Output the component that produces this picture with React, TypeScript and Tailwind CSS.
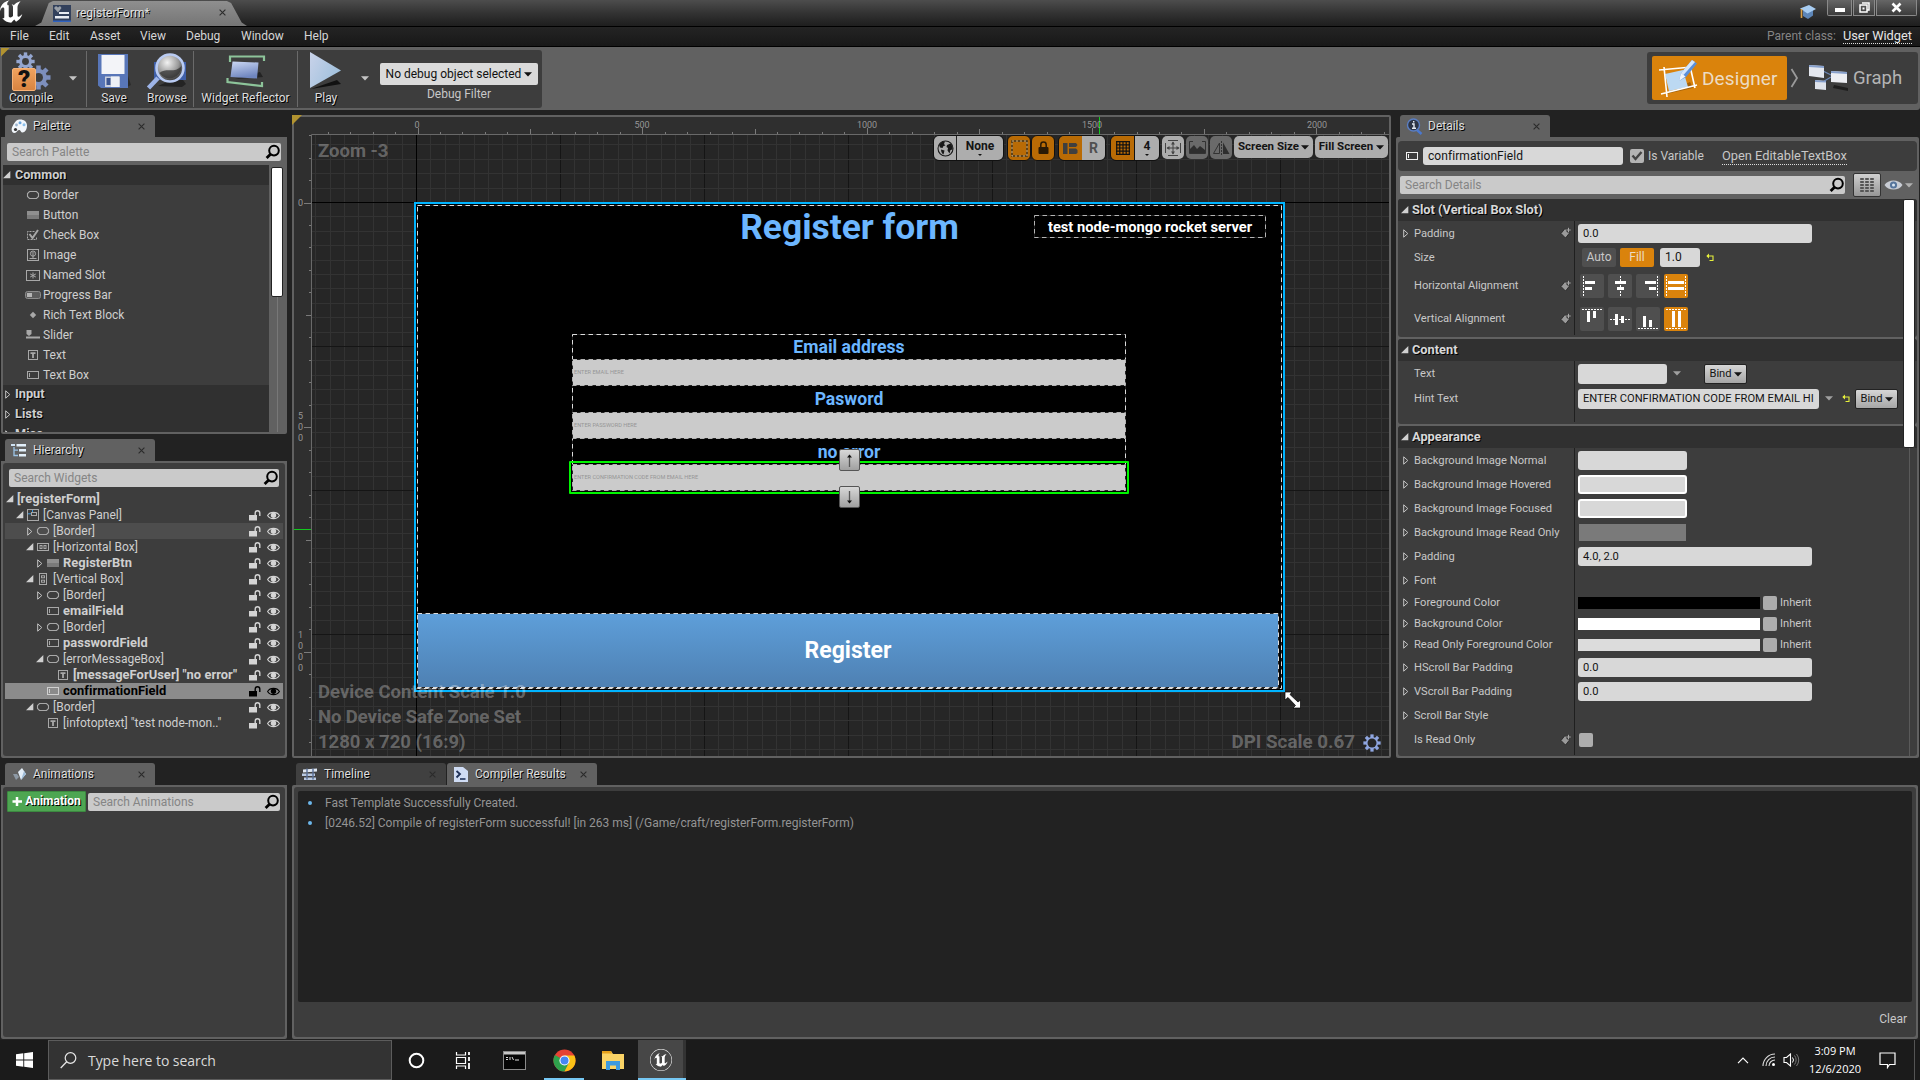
import React from "react";
import { SiUnrealengine } from "react-icons/si";

const SHADOW = "[text-shadow:1px_1px_0_#000]";

/* ---------- small glyphs ---------- */

function Down({ className = "" }: { className?: string }) {
  return (
    <svg width="8" height="5" viewBox="0 0 8 5" className={`shrink-0 ${className}`}>
      <path d="M0 0.3h8L4 4.6z" fill="currentColor" />
    </svg>
  );
}

function Open() {
  return (
    <svg width="8" height="8" viewBox="0 0 8 8" className="shrink-0">
      <path d="M7.3 0v7.3H0z" fill="#d0d0d0" />
    </svg>
  );
}

function Closed() {
  return (
    <svg width="6" height="9" viewBox="0 0 6 9" className="shrink-0">
      <path d="M0.7 0.8v7.4L4.8 4.5z" fill="none" stroke="#c4c4c4" strokeWidth="1" />
    </svg>
  );
}

function Magnifier() {
  return (
    <svg width="16" height="16" viewBox="0 0 16 16" className="shrink-0">
      <circle cx="9" cy="6.6" r="4.8" fill="none" stroke="#000" strokeWidth="2" />
      <path d="M5.5 10.3L1.6 14" stroke="#000" strokeWidth="2.8" />
    </svg>
  );
}

function Close() {
  return (
    <svg width="7" height="7" viewBox="0 0 7 7" className="shrink-0">
      <path d="M0.6 0.6l5.8 5.8M6.4 0.6L0.6 6.4" stroke="#2b2b2b" strokeWidth="1.1" />
    </svg>
  );
}

type IconName =
  | "border" | "button" | "check" | "image" | "slot" | "progress" | "rich"
  | "slider" | "text" | "textbox" | "canvas" | "hbox" | "vbox";

function WIcon({ name, color = "#a8a8a8" }: { name: IconName; color?: string }) {
  const s = { fill: "none", stroke: color, strokeWidth: 1 };
  return (
    <svg width="16" height="14" viewBox="0 0 16 14" className="shrink-0">
      {name === "border" && <path d="M4.5 3.5h7l2 2v3l-2 2h-7l-2-2v-3z" {...s} strokeWidth="1.1" />}
      {name === "button" && <><rect x="2" y="3" width="12" height="8" fill="#8f8f8f" /><path d="M2 7h12v4H2z" fill="#7a7a7a" /></>}
      {name === "check" && <><path d="M9.5 3.5h-7v8h9V9" {...s} strokeDasharray="2 1" /><path d="M4.5 6l3 4L13 2" fill="none" stroke={color} strokeWidth="2" /></>}
      {name === "image" && <><rect x="2.5" y="1.5" width="11" height="11" {...s} /><circle cx="8" cy="5.6" r="2.6" {...s} /><path d="M8 6v5M4.5 10.5h7M6.5 5h3" {...s} /></>}
      {name === "slot" && <><rect x="1.5" y="2.5" width="13" height="10" {...s} /><path d="M8 4.5v6M5.2 6l5.6 3M10.8 6L5.2 9" {...s} /></>}
      {name === "progress" && <><rect x="0.5" y="3.5" width="15" height="7" rx="2" fill="#5c5c5c" stroke="#8c8c8c" /><rect x="2" y="5" width="5" height="4" fill="#b5b5b5" /></>}
      {name === "rich" && <path d="M8 3.8l3.2 3.2L8 10.2 4.8 7z" fill={color} />}
      {name === "slider" && <><path d="M1 8.5h14v2H1z" fill={color} /><path d="M1.5 2h5v4L4 8 1.5 6z" fill={color} /></>}
      {name === "text" && <><rect x="3.5" y="2.5" width="9" height="9" {...s} /><path d="M5.5 5.2h5M8 5v5" fill="none" stroke={color} strokeWidth="1.8" /></>}
      {name === "textbox" && <><rect x="2.5" y="3.5" width="11" height="7" {...s} /><path d="M4.5 5v4" {...s} /></>}
      {name === "canvas" && <><rect x="2.5" y="1.5" width="11" height="11" {...s} /><rect x="6.5" y="4.5" width="5" height="3" {...s} /><path d="M3 5.8h3M7.5 2v2" stroke="#3f9be0" /></>}
      {name === "hbox" && <><rect x="2.5" y="3.5" width="11" height="7" {...s} /><rect x="5" y="5.5" width="2" height="3" {...s} /><rect x="9" y="5.5" width="2" height="3" {...s} /></>}
      {name === "vbox" && <><rect x="4.5" y="1.5" width="7" height="11" {...s} /><rect x="6.5" y="3.8" width="3" height="2" {...s} /><rect x="6.5" y="8.2" width="3" height="2" {...s} /></>}
    </svg>
  );
}

function Lock({ color }: { color: string }) {
  return (
    <svg width="12" height="11" viewBox="0 0 12 11" className="shrink-0">
      <rect x="0" y="5" width="8" height="5.5" fill={color} />
      <path d="M6.2 5V3a2.3 2.3 0 0 1 4.6 0v3" fill="none" stroke={color} strokeWidth="1.4" />
    </svg>
  );
}

function Eye({ color }: { color: string }) {
  return (
    <svg width="13" height="9" viewBox="0 0 13 9" className="shrink-0">
      <path d="M0.6 4.5C3 0.3 10 0.3 12.4 4.5 10 8.7 3 8.7 0.6 4.5z" fill="none" stroke={color} strokeWidth="1.1" />
      <circle cx="6.5" cy="4.3" r="2.7" fill={color} />
    </svg>
  );
}

function Keyframe() {
  return (
    <svg width="12" height="12" viewBox="0 0 12 12" className="shrink-0">
      <path d="M5 1.5L9.5 6 5.5 11 1 6.5z" fill="#9a9a9a" stroke="#222" strokeWidth="0.8" />
      <path d="M8.5 0.5v5M6 3h5" stroke="#3d3d3d" strokeWidth="3" />
      <path d="M8.5 0.8v4.4M6.3 3h4.4" stroke="#a8a8a8" strokeWidth="1" />
    </svg>
  );
}

function Reset() {
  return (
    <svg width="9" height="9" viewBox="0 0 9 9" className="shrink-0">
      <path d="M1 3h6v4.5H3.5" fill="none" stroke="#e6f03c" strokeWidth="1.1" />
      <path d="M0.3 3L3 0.6v4.8z" fill="#e6f03c" />
    </svg>
  );
}

function Gear({ size, color, hole, inner = 3.6 }: { size: number; color: string; hole: string; inner?: number }) {
  const teeth = [0, 45, 90, 135, 180, 225, 270, 315];
  return (
    <svg width={size} height={size} viewBox="-10 -10 20 20" className="shrink-0">
      {teeth.map((a) => (
        <rect key={a} x="-1.8" y="-9.6" width="3.6" height="5" fill={color} transform={`rotate(${a})`} />
      ))}
      <circle r="6.8" fill={color} />
      <circle r={inner} fill={hole} />
    </svg>
  );
}

const U_PATH =
  "M19.13 13.729c-.206.997-1.126 3.557-4.06 4.942l-1.179-1.325-1.988 2a7.338 7.338 0 01-5.804-2.978 2.859 2.859 0 00.65.123c.326.006.678-.114.678-.66v-5.394a.89.89 0 00-1.116-.89c-.92.212-1.656 2.509-1.656 2.509a7.304 7.304 0 012.528-5.597 7.408 7.408 0 013.73-1.721c-1.006.573-1.57 1.507-1.57 2.29 0 1.262.76 1.109.984.923v7.28a1.157 1.157 0 00.148.256 1.075 1.075 0 00.88.445c.76 0 1.747-.868 1.747-.868V9.172c0-.6-.452-1.324-.905-1.572 0 0 .838-.149 1.484.346a5.537 5.537 0 01.387-.425c1.508-1.48 2.929-1.902 4.112-2.112 0 0-2.151 1.69-2.151 3.96 0 1.687.043 5.801.043 5.801.799.771 1.986-.342 3.059-1.441z";

/* ---------- shared pieces ---------- */

function Tab({ icon, label, active = true }: { icon: React.ReactNode; label: string; active?: boolean }) {
  return (
    <div className={`flex h-[22px] w-[150px] items-center rounded-t-[3px] pr-[10px] pl-[5px] ${active ? "bg-[#616161]" : "bg-[#404040]"}`}>
      <span className="flex w-[18px] justify-center">{icon}</span>
      <span className={`ml-[5px] grow text-[12px] text-[#dedede] ${SHADOW}`}>{label}</span>
      <Close />
    </div>
  );
}

function Search({ text, className = "" }: { text: string; className?: string }) {
  return (
    <div className={`flex h-[18px] items-center justify-between rounded-[2px] bg-[#cacaca] pl-[5px] text-[12px] text-[#858585] ${className}`}>
      <span>{text}</span>
      <Magnifier />
    </div>
  );
}

/* ---------- title, menu, toolbar ---------- */

function TitleBar() {
  return (
    <div className="flex h-[26px] items-start justify-between bg-linear-to-b from-[#4d4d4d] via-[#333] to-[#1e1e1e]">
      <div className="flex">
        <svg width="24" height="24" viewBox="4.2 4.6 15.2 15.6" className="mr-[12px] -ml-px">
          <path d={U_PATH} fill="#fff" />
        </svg>
        <div className="mt-px flex h-[25px] w-[212px] items-center bg-linear-to-b from-[#8f8f8f] to-[#757575] pb-[2px] pl-[18px] [clip-path:polygon(0_100%,3%_86%,6.5%_8%,8.5%_0,90.5%_0,92.5%_8%,97.5%_86%,100%_100%)]">
          <svg width="18" height="17" viewBox="0 0 18 17" className="mt-[2px]">
            <rect width="18" height="17" fill="#33415c" />
            <path d="M1 3l2-2 2 1.500 2-1.500 1.500 2L5 7.500z" fill="#9aa0a8" />
            <path d="M6 7h10v2H6zM2 11h14v2.500H2z" fill="#e8ecf2" />
            <path d="M0 15.500h18V17H0z" fill="#2f62c0" />
          </svg>
          <span className={`ml-[5px] w-[143px] text-[12px] text-[#e2e2e2] ${SHADOW}`}>registerForm*</span>
          <Close />
        </div>
      </div>
      <div className="flex">
        <svg width="18" height="16" viewBox="0 0 18 16" className="mt-[4px] mr-[10px]">
          <path d="M4 7v5l5 3 5-3.500V6z" fill="#5d86b8" />
          <path d="M1 4.500L10 1l7 4-8.500 4.500z" fill="#a8cdf2" />
          <path d="M2.500 5v9" stroke="#d9a14a" strokeWidth="1.600" />
        </svg>
        <div className="flex h-[16px] gap-px text-white">
          <div className="flex w-[25px] items-end justify-center rounded-bl-[2px] border border-t-0 border-[#8a8a8a] bg-linear-to-b from-[#666] to-[#3c3c3c] pb-[3px]">
            <span className="h-[4px] w-[10px] bg-white" />
          </div>
          <div className="flex w-[22px] items-center justify-center border border-t-0 border-[#8a8a8a] bg-linear-to-b from-[#666] to-[#3c3c3c]">
            <svg width="11" height="11" viewBox="0 0 11 11">
              <path d="M3 1h7v7H8M1 3h7v7H1z" fill="none" stroke="#fff" strokeWidth="1.500" />
              <rect x="3.500" y="5.500" width="2" height="2" fill="#fff" />
            </svg>
          </div>
          <div className="mr-[3px] flex w-[41px] items-center justify-center rounded-br-[2px] border border-t-0 border-[#8a8a8a] bg-linear-to-b from-[#666] to-[#3c3c3c]">
            <svg width="11" height="11" viewBox="0 0 11 11">
              <path d="M1.500 1.500l8 8M9.500 1.500l-8 8" stroke="#fff" strokeWidth="2.600" />
            </svg>
          </div>
        </div>
      </div>
    </div>
  );
}

function MenuBar() {
  return (
    <div className="flex h-[21px] items-center border-y border-black bg-linear-to-b from-[#242424] to-[#181818] pb-[2px] text-[12px] text-[#d6d6d6]">
      <span className="ml-[10px] w-[39px]">File</span>
      <span className="w-[41px]">Edit</span>
      <span className="w-[50px]">Asset</span>
      <span className="w-[46px]">View</span>
      <span className="w-[55px]">Debug</span>
      <span className="w-[63px]">Window</span>
      <span className="grow">Help</span>
      <span className="mr-[7px] text-[#858585]">Parent class:</span>
      <span className="mt-px mr-[8px] border-b border-dotted border-[#ddd] text-[12.8px] leading-[14px] text-[#e6e6e6]">User Widget</span>
    </div>
  );
}

function Tool({ icon, label, className }: { icon: React.ReactNode; label: string; className: string }) {
  return (
    <div className={`flex h-full flex-col items-center justify-between pt-[2px] pb-[3px] ${className}`}>
      <div className="flex h-[39px] items-center">{icon}</div>
      <span className={`text-[12px] leading-[14px] whitespace-nowrap text-[#dedede] ${SHADOW}`}>{label}</span>
    </div>
  );
}

function Sep() {
  return <div className="h-[56px] w-px shrink-0 bg-[#6a6a6a]" />;
}

function CompileIcon() {
  return (
    <div className="relative h-[39px] w-[40px]">
      <div className="absolute top-0 left-[5px]"><Gear size={19} color="#94a6d0" hole="#3d3d3d" /></div>
      <div className="absolute top-[13px] left-[15px]"><Gear size={25} color="#7d8fbd" hole="#3d3d3d" /></div>
      <div className="absolute top-[16px] left-[1px] flex h-[23px] w-[24px] items-center justify-center rounded-[2px] border border-[#f7b277] bg-linear-to-b from-[#f0a35f] to-[#d98440] text-[24px] leading-none font-black text-[#111]">?</div>
    </div>
  );
}

function SaveIcon() {
  return (
    <svg width="34" height="38" viewBox="0 0 34 38">
      <path d="M4 33l26 2 4-2-4-12z" fill="#222" opacity=".7" />
      <path d="M1 2h30v34H4l-3-2.500z" fill="#5876b8" />
      <path d="M4.500 3h23v19h-23z" fill="#f3f4f8" />
      <path d="M8 24.500h15V35H8z" fill="#c9cfdd" />
      <path d="M9.500 26h4v7h-4z" fill="#3d5691" />
      <path d="M14 24.500h8V35h-8z" fill="#edf0f6" />
    </svg>
  );
}

function BrowseIcon() {
  return (
    <svg width="42" height="39" viewBox="0 0 42 39">
      <defs>
        <radialGradient id="lens" cx=".4" cy=".3" r=".75">
          <stop offset="0" stopColor="#f2f2f2" />
          <stop offset=".55" stopColor="#9a9a9a" />
          <stop offset="1" stopColor="#222" />
        </radialGradient>
      </defs>
      <path d="M12 34l24 1 4-3-6-8z" fill="#1e1e1e" opacity=".8" />
      <path d="M8 10h32v18H8z" fill="#3f5fa8" />
      <path d="M12 26L2.500 36" stroke="#9db4e8" strokeWidth="4.500" />
      <circle cx="24" cy="16" r="13.500" fill="url(#lens)" stroke="#b9cbf2" strokeWidth="2.600" />
      <path d="M13.500 21C20 15 29 22 35.500 14a12 12 0 0 1-22 7z" fill="#333" opacity=".75" />
    </svg>
  );
}

function ReflectorIcon() {
  return (
    <svg width="40" height="34" viewBox="0 0 40 34">
      <defs>
        <linearGradient id="refl" x2=".3" y2="1">
          <stop offset="0" stopColor="#ccd8f4" />
          <stop offset="1" stopColor="#6f86bf" />
        </linearGradient>
      </defs>
      <path d="M9 25l28-2-3-5z" fill="#1d1d1d" opacity=".8" />
      <path d="M6.500 7.500l26 1-1.500 16-26.500-1.500z" fill="url(#refl)" />
      <path d="M4 8V2.500h34V7M1.500 24v4L36 32v-4" fill="none" stroke="#8dc49a" strokeWidth="2.200" />
    </svg>
  );
}

function PlayIcon() {
  return (
    <svg width="36" height="40" viewBox="0 0 36 40">
      <defs>
        <linearGradient id="play" x2="1" y2=".6">
          <stop offset="0" stopColor="#c9d3ea" />
          <stop offset="1" stopColor="#9fc0dc" />
        </linearGradient>
      </defs>
      <path d="M3 38l30-5-4-4z" fill="#111" />
      <path d="M2 1v36l31-17.500z" fill="url(#play)" />
    </svg>
  );
}

function DesignerIcon() {
  return (
    <svg width="42" height="42" viewBox="0 0 42 42">
      <path d="M9 37l27-6-3-6z" fill="#8a5208" opacity=".7" />
      <path d="M8 17l18-4 5 17-19 4z" fill="#bcd9f2" />
      <path d="M2 13l33-3M7 10l3 30M4 37l36-9M33 9l5 22" fill="none" stroke="#fff" strokeWidth="1.600" />
      <path d="M22 24l2-8L35 3l5 3.500L29 20z" fill="#5b8fd8" />
      <path d="M24 16L35 3l3 2-11.500 13z" fill="#d6e6fa" />
      <path d="M22 24l2-8 4.500 3.500z" fill="#f0f4fa" />
    </svg>
  );
}

function GraphIcon() {
  return (
    <svg width="42" height="30" viewBox="0 0 42 30">
      <path d="M26 22l14 3v3l-15-3z" fill="#1e1e1e" />
      <path d="M15 8l10 5M13 20l10-6" stroke="#6c88b8" strokeWidth="1.200" />
      <path d="M1 2l15 1v12L1 13z" fill="#e4e7ee" />
      <path d="M1 2l15 1v2L1 4z" fill="#87a0cc" />
      <path d="M23 8l16 1v11l-16-1z" fill="#eceef3" />
      <path d="M23 8l16 1v2l-16-1z" fill="#87a0cc" />
      <path d="M7 17l11 1v9L7 26z" fill="#dfe3ea" />
      <path d="M7 17l11 1v1.500L7 19z" fill="#87a0cc" />
    </svg>
  );
}

function Toolbar() {
  return (
    <div className="flex h-[63px] items-center justify-between rounded-b-[3px] bg-[#616161] px-[2px]">
      <div className="relative flex h-[58px] w-[540px] items-center rounded-[3px] bg-[#3d3d3d]">
        <div className="absolute -top-[2px] -left-px h-[9px] w-[9px] bg-[#b29330] [clip-path:polygon(0_0,100%_0,0_100%)]" />
        <Tool className="w-[58px]" label="Compile" icon={<CompileIcon />} />
        <span className="flex w-[26px] justify-center text-[#c4c4c4]"><Down /></span>
        <Sep />
        <Tool className="w-[54px]" label="Save" icon={<SaveIcon />} />
        <Tool className="w-[52px]" label="Browse" icon={<BrowseIcon />} />
        <Sep />
        <Tool className="w-[103px]" label="Widget Reflector" icon={<ReflectorIcon />} />
        <Sep />
        <Tool className="w-[56px]" label="Play" icon={<PlayIcon />} />
        <span className="ml-[7px] flex text-[#c4c4c4]"><Down /></span>
        <div className="ml-[11px] flex flex-col items-center pt-[8px]">
          <div className="flex h-[22px] w-[158px] items-center justify-center gap-[3px] rounded-[2px] bg-[#dadada] text-[12px] text-[#111]">
            No debug object selected <Down />
          </div>
          <span className="mt-[2px] text-[12px] leading-[15px] text-[#c8c8c8]">Debug Filter</span>
        </div>
      </div>
      <div className="mb-px flex h-[52px] w-[271px] items-center rounded-[3px] bg-[#3d3d3d] pl-[5px]">
        <div className="flex h-[44px] w-[135px] items-center rounded-[2px] bg-[#da830c] pl-[5px]">
          <DesignerIcon />
          <span className="ml-[3px] text-[19px] tracking-[0.12px] text-[#ecdcc4]">Designer</span>
        </div>
        <svg width="10" height="20" viewBox="0 0 10 20" className="ml-[3px]">
          <path d="M1.500 1l5.500 9-5.500 9" fill="none" stroke="#9a9a9a" strokeWidth="1.800" />
        </svg>
        <span className="ml-[8px] flex"><GraphIcon /></span>
        <span className="ml-[3px] text-[18.5px] text-[#b4b4b4]">Graph</span>
      </div>
    </div>
  );
}

/* ---------- left column ---------- */

const PALETTE: [IconName, string][] = [
  ["border", "Border"], ["button", "Button"], ["check", "Check Box"], ["image", "Image"], ["slot", "Named Slot"],
  ["progress", "Progress Bar"], ["rich", "Rich Text Block"], ["slider", "Slider"], ["text", "Text"], ["textbox", "Text Box"],
];

function PaletteIcon() {
  return (
    <svg width="17" height="15" viewBox="0 0 17 15">
      <path d="M5 2C9-1 16 1 16 6.500c0 4-2 7-4.500 7-2 0-1.500-2.500-3.500-2.500S6 14 3.500 14C1 14 0 11 1 8.500c.5-1.500 2-4.500 4-6.500z" fill="#f2f6fb" />
      <circle cx="9" cy="3.800" r="1.500" fill="#6aa4dc" />
      <circle cx="13" cy="5.800" r="1.500" fill="#8cc0ec" />
      <circle cx="5.500" cy="6" r="1.400" fill="#9ab4d0" />
      <circle cx="4.500" cy="10.500" r="1.600" fill="#333" />
    </svg>
  );
}

function Palette() {
  return (
    <section className="h-[319px]">
      <div className="ml-[4px]"><Tab icon={<PaletteIcon />} label="Palette" /></div>
      <div className="flex h-[297px] flex-col rounded-b-[2px] bg-[#616161] p-[2px] pt-[6px]">
        <Search text="Search Palette" className="mx-[4px] shrink-0" />
        <div className="mt-[4px] flex min-h-0 grow">
          <div className="w-[266px] overflow-hidden bg-[#303030] text-[12px] text-[#cfcfcf]">
            <div className={`flex h-[20px] items-center text-[12.600px] font-bold ${SHADOW}`}><span className="mr-[4px]"><Open /></span>Common</div>
            <div className="bg-[#3d3d3d]">
              {PALETTE.map(([ic, label]) => (
                <div key={label} className="flex h-[20px] items-center gap-[2px] pl-[22px]">
                  <WIcon name={ic} />
                  {label}
                </div>
              ))}
            </div>
            {["Input", "Lists", "Misc"].map((t) => (
              <div key={t} className={`flex h-[20px] items-center pb-[2px] text-[12.800px] font-bold ${SHADOW}`}><span className="mr-[4px] ml-[2px]"><Closed /></span>{t}</div>
            ))}
          </div>
          <div className="flex grow flex-col items-center">
            <div className="mt-[2px] h-[130px] w-[12px] rounded-[2px] border border-[#222] bg-white" />
            <div className="w-px grow bg-[#787878]" />
          </div>
        </div>
      </div>
    </section>
  );
}

type Node = { d: number; open?: boolean; closed?: boolean; icon?: IconName; label: string; bold?: boolean; state?: "hover" | "sel" };
const NODES: Node[] = [
  { d: 0, open: true, label: "[registerForm]", bold: true },
  { d: 1, open: true, icon: "canvas", label: "[Canvas Panel]" },
  { d: 2, closed: true, icon: "border", label: "[Border]", state: "hover" },
  { d: 2, open: true, icon: "hbox", label: "[Horizontal Box]" },
  { d: 3, closed: true, icon: "button", label: "RegisterBtn", bold: true },
  { d: 2, open: true, icon: "vbox", label: "[Vertical Box]" },
  { d: 3, closed: true, icon: "border", label: "[Border]" },
  { d: 3, icon: "textbox", label: "emailField", bold: true },
  { d: 3, closed: true, icon: "border", label: "[Border]" },
  { d: 3, icon: "textbox", label: "passwordField", bold: true },
  { d: 3, open: true, icon: "border", label: "[errorMessageBox]" },
  { d: 4, icon: "text", label: '[messageForUser] "no error"', bold: true },
  { d: 3, icon: "textbox", label: "confirmationField", bold: true, state: "sel" },
  { d: 2, open: true, icon: "border", label: "[Border]" },
  { d: 3, icon: "text", label: '[infotoptext] "test node-mon.."' },
];
const INDENT = ["w-0", "w-[10px]", "w-[20px]", "w-[30px]", "w-[40px]"];

function Hierarchy() {
  return (
    <section className="mt-[5px] h-[319px]">
      <div className="ml-[4px]">
        <Tab
          label="Hierarchy"
          icon={
            <svg width="16" height="13" viewBox="0 0 16 13">
              <path d="M0 0h4v2H0z" fill="#cfe2f2" />
              <path d="M5.500 0H15v2.500H5.500zM8 5h7v2.500H8zM8 10h7v2.500H8z" fill="#e2effa" />
              <path d="M3 3v8.500h4M3 6.200h4" fill="none" stroke="#9cc4e6" strokeWidth="1.300" />
            </svg>
          }
        />
      </div>
      <div className="h-[297px] rounded-b-[2px] bg-[#616161] p-[2px]">
        <div className="h-full rounded-[3px] bg-[#3d3d3d] px-[2px] pt-[6px]">
          <Search text="Search Widgets" className="mx-[4px]" />
          <div className="mt-[4px] text-[12px] text-[#cfcfcf]">
            {NODES.map((n, i) => (
              <div
                key={i}
                className={`flex h-[16px] items-center ${n.state === "sel" ? "bg-[#8b8b8b] text-black" : n.state === "hover" ? "bg-[#4d4d4d]" : ""}`}
              >
                <span className={`shrink-0 ${INDENT[n.d]}`} />
                <span className="flex w-[10px] shrink-0 justify-center pr-px">{n.open ? <Open /> : n.closed ? <Closed /> : null}</span>
                {n.icon && <WIcon name={n.icon} color={n.state === "sel" ? "#cfcfcf" : undefined} />}
                <span className={`ml-[2px] grow whitespace-nowrap ${n.bold ? "pt-px text-[12.900px] font-bold tracking-[0.05px]" : "text-[12px] tracking-[0.02px]"}`}>{n.label}</span>
                {i > 0 && (
                  <span className="mr-[3px] flex shrink-0 items-center gap-[6px]">
                    <Lock color={n.state === "sel" ? "#000" : "#d4d4d4"} />
                    <Eye color={n.state === "sel" ? "#000" : "#d4d4d4"} />
                  </span>
                )}
              </div>
            ))}
          </div>
        </div>
      </div>
    </section>
  );
}

function Animations() {
  return (
    <section className="mt-[5px] h-[276px]">
      <div className="ml-[4px]">
        <Tab
          label="Animations"
          icon={
            <svg width="15" height="13" viewBox="0 0 15 13">
              <path d="M1 6l3 6 3-3-2-3z" fill="#8d99a5" />
              <path d="M6 4l4-4 4 6-5 6z" fill="#e4eef8" />
              <path d="M9 12l5-6-2-3z" fill="#9fbcd8" />
            </svg>
          }
        />
      </div>
      <div className="h-[254px] rounded-b-[2px] bg-[#616161] p-[2px]">
        <div className="flex h-full items-start rounded-[3px] bg-[#3d3d3d] px-[4px] pt-[4px]">
          <div className={`flex h-[21px] w-[79px] items-center justify-center gap-[2px] rounded-[1px] border border-[#3c8a40] bg-[#4ea652] pb-px text-[12px] font-bold text-white ${SHADOW}`}>
            <svg width="11" height="11" viewBox="0 0 11 11" className="shrink-0">
              <path d="M5 1v9M0.500 5.500h9.500" stroke="#fff" strokeWidth="2.500" />
            </svg>
            Animation
          </div>
          <Search text="Search Animations" className="mt-[2px] ml-[2px] w-[192px]" />
        </div>
      </div>
    </section>
  );
}

/* ---------- designer canvas ---------- */

const range = (a: number, b: number) => Array.from({ length: b - a + 1 }, (_, i) => a + i);

function Backdrop() {
  // drawn in a 1095 x 639 box whose origin is the inner corner of the panel
  const ox = 122.5;
  const oy = 85.5;
  const step = 14.4;
  return (
    <svg width="1095" height="639" viewBox="0 0 1095 639" className="absolute inset-0">
      <rect width="1095" height="639" fill="#2f2f2f" />
      <rect x="18" y="18" width="1077" height="621" fill="#262626" />
      {range(-7, 67).map((i) => {
        const x = Math.floor(ox + i * step) + 0.5;
        return <path key={i} d={`M${x} 18V639`} stroke={i % 10 ? "#333" : "#151515"} />;
      })}
      {range(-4, 38).map((i) => {
        const y = Math.floor(oy + i * step) + 0.5;
        return <path key={i} d={`M18 ${y}H1095`} stroke={i % 10 ? "#333" : "#151515"} />;
      })}
      <path d={`M${ox} 18V639M18 ${oy}H1095`} stroke="#000" />
      <path d="M17.500 639V17.500H1095" fill="none" stroke="#696969" />
      {range(-4, 43).map((i) => {
        const x = Math.floor(124 + i * 22.47) + 0.5;
        return <path key={i} d={`M${x} 17v-${i % 10 === 0 ? 6 : i % 5 === 0 ? 5 : 2}`} stroke="#7a7a7a" />;
      })}
      {range(-3, 24).map((i) => {
        const y = Math.floor(86 + i * 22.47) + 0.5;
        return <path key={i} d={`M17 ${y}h-${i % 10 === 0 ? 7 : i % 5 === 0 ? 5 : 2}`} stroke="#7a7a7a" />;
      })}
      <path d="M805.500 0v17M0 412.500h17" stroke="#12c81e" />
    </svg>
  );
}

function Dashed({ w, h, color = "#dcdcdc" }: { w: number; h: number; color?: string }) {
  return (
    <svg width={w} height={h} viewBox={`0 0 ${w} ${h}`} className="pointer-events-none absolute top-0 left-0">
      <rect x="0.5" y="0.5" width={w - 1} height={h - 1} fill="none" stroke="#222" />
      <rect x="0.5" y="0.5" width={w - 1} height={h - 1} fill="none" stroke={color} strokeDasharray="4.500 3.500" />
    </svg>
  );
}

function Field({ hint }: { hint: string }) {
  return (
    <div className="relative flex h-[27px] w-[554px] items-center bg-[#cbcbcb] pt-px pl-[2px] text-[5.600px] text-[#969696]">
      {hint}
      <Dashed w={554} h={27} color="#b4b4b4" />
    </div>
  );
}

function MoveButton({ up = false }: { up?: boolean }) {
  return (
    <div className="flex h-[22px] w-[21px] items-center justify-center rounded-[2px] border border-[#555] bg-linear-to-b from-[#d8d8d8] to-[#a0a0a0]">
      <svg width="7" height="13" viewBox="0 0 7 13" className={up ? "" : "rotate-180"}>
        <path d="M3.500 1.500V13" stroke="#555" strokeWidth="1.300" />
        <path d="M1 3.500L3.500 0.500 6 3.500z" fill="#111" />
      </svg>
    </div>
  );
}

const PILL = "flex h-[24px] items-center justify-center bg-[#adadad] text-[#141414]";

function CanvasTools() {
  return (
    <div className="absolute top-[18px] right-px flex items-start text-[11.500px] font-bold">
      <div className="flex overflow-hidden rounded-[6px] border border-[#111]">
        <div className={`${PILL} w-[23px] border-r border-[#222]`}>
          <svg width="17" height="17" viewBox="0 0 17 17">
            <circle cx="8.500" cy="8.500" r="7.500" fill="#adadad" stroke="#1a1a1a" strokeWidth="1.100" />
            <path d="M2 5c1.500-2.500 3.500-3.500 6-3.500L7 4l1.500 1.500-2 .5L5.500 8 3 7.500zM4 9.500l3.500 1L6.500 14.500C5 13.500 4 12 4 9.500zM10 5l3.500-1.500c1.500 1.500 2.500 3.500 2 6l-2 .5-1 3.500-2-3 .5-2.500-1.500-1z" fill="#1a1a1a" />
          </svg>
        </div>
        <div className={`${PILL} w-[46px] flex-col pb-px`}>
          <span className="text-[12px] leading-[15px]">None</span>
          <svg width="4" height="2" viewBox="0 0 4 2"><path d="M0 0h4L2 2z" fill="#111" /></svg>
        </div>
      </div>
      <div className="ml-[3px] flex h-[26px] w-[24px] items-center justify-center rounded-[6px] border border-[#111] bg-[#b96b05]">
        <svg width="17" height="17" viewBox="0 0 17 17">
          <rect x="1" y="1" width="15" height="15" fill="none" stroke="#4a3a20" strokeWidth="1.600" />
          <rect x="1" y="1" width="15" height="15" fill="none" stroke="#d9b47a" strokeDasharray="2 2" />
        </svg>
      </div>
      <div className="flex h-[26px] w-[24px] items-center justify-center rounded-[6px] border border-[#111] bg-[#b96b05]">
        <svg width="11" height="14" viewBox="0 0 11 14">
          <rect x="0.500" y="6" width="10" height="7" rx="1" fill="#2a1a05" />
          <path d="M2.800 6V3.800a2.700 2.700 0 0 1 5.400 0V6" fill="none" stroke="#2a1a05" strokeWidth="1.500" />
        </svg>
      </div>
      <div className="ml-[3px] flex overflow-hidden rounded-[6px] border border-[#111]">
        <div className="flex h-[24px] w-[23px] items-center justify-center bg-[#b96b05]">
          <svg width="15" height="13" viewBox="0 0 15 13">
            <path d="M0 1h4.500v11H0zM6 1h7l1.500 2L13 5H6zM6 6.500h7l1.500 1.500v3L13 12H6z" fill="#3f3f3f" />
          </svg>
        </div>
        <div className={`${PILL} w-[23px] text-[14px]`}><span className="text-[#505050]">R</span></div>
      </div>
      <div className="ml-[4px] flex overflow-hidden rounded-[6px] border border-[#111]">
        <div className="flex h-[24px] w-[24px] items-center justify-center border-r border-[#111] bg-[#b96b05]">
          <svg width="14" height="14" viewBox="0 0 14 14">
            <path d="M.700 0v14M3.800 0v14M7 0v14M10.200 0v14M13.300 0v14M0 .700h14M0 3.800h14M0 7h14M0 10.200h14M0 13.300h14" stroke="#111" strokeWidth="1.200" />
          </svg>
        </div>
        <div className={`${PILL} w-[24px] flex-col pb-px`}>
          <span className="text-[12px] leading-[15px]">4</span>
          <svg width="4" height="2" viewBox="0 0 4 2"><path d="M0 0h4L2 2z" fill="#111" /></svg>
        </div>
      </div>
      <div className="mt-px ml-[2px] flex h-[23px] w-[22px] items-center justify-center rounded-[5px] bg-[#adadad]">
        <svg width="16" height="16" viewBox="0 0 16 16">
          <path d="M3 .500h10M3 15.500h10M.500 3v10M15.500 3v10M8 2v12M2 8h12" fill="none" stroke="#444" />
          <path d="M8 1.500L6 4.500h4zM8 14.500l-2-3h4zM1.500 8l3-2v4zM14.500 8l-3-2v4z" fill="#444" />
        </svg>
      </div>
      <div className="mt-px ml-[2px] flex h-[23px] w-[22px] items-center justify-center rounded-[5px] bg-[#6a6a6a]">
        <svg width="17" height="13" viewBox="0 0 17 13">
          <path d="M4 .500H.500v12h16V.500H13" fill="none" stroke="#333" />
          <path d="M1 12V8l4-4 3 4 3-3 5 4v3z" fill="#2e2e2e" />
        </svg>
      </div>
      <div className="mt-px ml-[2px] flex h-[23px] w-[22px] items-center justify-center rounded-[5px] bg-[#6a6a6a]">
        <svg width="17" height="14" viewBox="0 0 17 14">
          <path d="M6.500 2v10.500h-6z" fill="none" stroke="#333" />
          <path d="M8.500 0v14" stroke="#333" strokeDasharray="2 1" />
          <path d="M10 1.500v11.500h6.500z" fill="#2e2e2e" />
        </svg>
      </div>
      <div className="mt-px ml-[2px] flex h-[22px] w-[79px] items-center justify-center gap-[2px] rounded-[5px] bg-[#adadad] text-[#141414]">Screen Size <Down /></div>
      <div className="mt-px ml-[2px] flex h-[22px] w-[73px] items-center justify-center gap-[3px] rounded-[5px] bg-[#adadad] text-[#141414]">Fill Screen <Down /></div>
    </div>
  );
}

const H_LABELS: [string, string][] = [
  ["0", "left-[103px]"], ["500", "left-[328px]"], ["1000", "left-[553px]"], ["1500", "left-[778px]"], ["2000", "left-[1003px]"],
];

function Designer() {
  return (
    <section className="relative h-[643px] w-[1099px] rounded-[2px] border-2 border-[#616161]">
      <div className="relative h-[639px] w-[1095px] overflow-hidden">
        <Backdrop />
        {H_LABELS.map(([t, pos]) => (
          <span key={t} className={`absolute top-[2px] w-[40px] text-center text-[9px] leading-[12px] text-[#969696] ${pos}`}>{t}</span>
        ))}
        <span className="absolute top-[80px] left-[4px] text-[9px] leading-[12px] text-[#969696]">0</span>
        <span className="absolute top-[294px] left-[4px] w-[6px] text-[9px] leading-[11px] break-all text-[#969696]">500</span>
        <span className="absolute top-[513px] left-[4px] w-[6px] text-[9px] leading-[11px] break-all text-[#969696]">1000</span>

        {/* previewed widget */}
        <div className="absolute top-[85px] left-[120px] h-[490px] w-[871px] border-2 border-[#00b4ff] bg-black">
          <div className="absolute top-px left-px h-[484px] w-[865px]">
            <Dashed w={865} h={484} />
            <div className="flex justify-center pt-px text-[35.400px] leading-[42px] font-bold text-[#6cb6ff]">
              <span>Register form</span>
            </div>
            <div className="absolute top-[10px] left-[617px] flex h-[23px] w-[232px] items-center justify-center pt-[2px] text-[14.700px] font-bold text-white">
              test node-mongo rocket server
              <Dashed w={232} h={23} color="#b4b4b4" />
            </div>
            <div className="absolute top-[129px] left-[155px] flex w-[554px] flex-col text-center text-[17.600px] font-bold text-[#6cb6ff]">
              <Dashed w={554} h={157} />
              <div className="h-[25px] leading-[27px]">Email address</div>
              <div className="font-normal"><Field hint="ENTER EMAIL HERE" /></div>
              <div className="h-[26px] leading-[26px]">Pasword</div>
              <div className="font-normal"><Field hint="ENTER PASSWORD HERE" /></div>
              <div className="h-[25px] leading-[27px]">no error</div>
              <div className="relative font-normal">
                <Field hint="ENTER CONFIRMATION CODE FROM EMAIL HERE" />
                <div className="absolute -top-[3px] -left-[3px] h-[33px] w-[560px] rounded-[1px] border-2 border-[#00f500]" />
              </div>
            </div>
            <div className="absolute top-[244px] left-[422px] flex flex-col gap-[15px]">
              <MoveButton up />
              <MoveButton />
            </div>
            <div className="absolute top-[408px] left-0 flex h-[75px] w-[862px] items-center justify-center bg-linear-to-b from-[#5e9fda] to-[#4e80b2] text-[23px] font-bold text-white">
              Register
              <Dashed w={862} h={75} />
            </div>
          </div>
        </div>

        {/* viewport readouts */}
        <span className="absolute top-[22px] left-[24px] text-[18.500px] leading-[24px] font-bold text-white/30">Zoom -3</span>
        <div className="absolute bottom-px left-[24px] text-[18.500px] leading-[25px] font-bold text-white/30">
          <div>Device Content Scale 1.0</div>
          <div className="tracking-[-0.08px]">No Device Safe Zone Set</div>
          <div>1280 x 720 (16:9)</div>
        </div>
        <div className="absolute right-[8px] bottom-px flex items-center gap-[8px] text-[18.800px] leading-[25px] font-bold text-white/30">
          DPI Scale 0.67
          <Gear size={18} color="#8fa6e0" hole="#262626" inner={5} />
        </div>
        <svg width="19" height="18" viewBox="0 0 19 18" className="absolute top-[574px] left-[990px]">
          <path d="M1 1h7L6 3.500 14 11l2.500-2v8H9l2.500-2.500L4 6.500 1 9z" fill="#fff" stroke="#000" strokeWidth=".7" />
        </svg>
        <CanvasTools />
      </div>
      <div className="absolute -top-[2px] -left-[2px] h-[10px] w-[10px] bg-[#b29330] [clip-path:polygon(0_0,100%_0,0_100%)]" />
    </section>
  );
}

/* ---------- details ---------- */

function Header({ text }: { text: string }) {
  return (
    <div className={`flex h-[22px] items-center rounded-t-[3px] bg-[#303030] pl-[3px] text-[12.800px] font-bold text-[#d8d8d8] ${SHADOW}`}>
      <Open />
      <span className="ml-[3px]">{text}</span>
    </div>
  );
}

function Row({ label, h = "h-[24px]", exp, keyed, children }: { label: string; h?: string; exp?: boolean; keyed?: boolean; children?: React.ReactNode }) {
  return (
    <div className={`flex text-[11.150px] text-[#c8c8c8] ${h}`}>
      <div className="flex w-[177px] shrink-0 items-center border-r border-[#1f1f1f] pl-[5px]">
        <span className="w-[11px]">{exp && <Closed />}</span>
        <span className="grow pt-px">{label}</span>
        {keyed && <Keyframe />}
        <span className="w-[2px]" />
      </div>
      <div className="flex items-center pl-[3px]">{children}</div>
    </div>
  );
}

function Input({ className, children }: { className: string; children?: React.ReactNode }) {
  return (
    <div className={`flex h-[19px] items-center overflow-hidden rounded-[3px] bg-[#d8d8d8] pl-[5px] whitespace-nowrap text-[#141414] ${className}`}>{children}</div>
  );
}

function Bind({ className }: { className: string }) {
  return (
    <div className={`flex h-[20px] w-[43px] items-center justify-center gap-[2px] rounded-[2px] border border-[#222] bg-linear-to-b from-[#d6d6d6] to-[#a6a6a6] pt-px text-[#141414] ${className}`}>
      Bind <Down />
    </div>
  );
}

function Check({ className = "" }: { className?: string }) {
  return <span className={`h-[14px] w-[14px] rounded-[2px] bg-[#adadad] ${className}`} />;
}

const H_ALIGN = [
  ["M3.5 2v20", "M5 7h10v3H5zM5 13h7v3H5z"],
  ["M12.5 2v20", "M7 7h11v3H7zM9 13h7v3H9z"],
  ["M21.5 2v20", "M9 7h11v3H9zM13 13h7v3h-7z"],
  ["M2.5 2v20M21.5 2v20", "M4 7h16v3H4zM4 13h16v3H4z"],
];
const V_ALIGN = [
  ["M2 2.500h20", "M7 4h3v11H7zM13 4h3v7h-3z"],
  ["M2 12.500h20", "M7 7h3v11H7zM13 9h3v7h-3z"],
  ["M2 21.500h20", "M7 9h3v11H7zM13 13h3v7h-3z"],
  ["M2 2.500h20M2 21.500h20", "M8 4h3v16H8zM14 4h3v16h-3z"],
];

function Align({ set }: { set: string[][] }) {
  return (
    <div className="ml-[2px] flex gap-[4px]">
      {set.map(([dash, solid], i) => (
        <div key={i} className={`h-[24px] w-[24px] rounded-[2px] ${i === 3 ? "bg-[#da830c]" : "bg-[#4f4f4f]"}`}>
          <svg width="24" height="24" viewBox="0 0 24 24">
            <path d={dash} stroke="#fff" strokeDasharray="2 1" />
            <path d={solid} fill="#fff" />
          </svg>
        </div>
      ))}
    </div>
  );
}

function ColorRow({ label, swatch }: { label: string; swatch: string }) {
  return (
    <Row label={label} h="h-[21px]" exp>
      <div className={`h-[12px] w-[182px] ${swatch}`} />
      <Check className="ml-[3px]" />
      <span className="ml-[3px]">Inherit</span>
    </Row>
  );
}

function Details() {
  return (
    <section className="h-[643px] w-[523px]">
      <div className="ml-[4px]">
        <Tab
          label="Details"
          icon={
            <svg width="17" height="17" viewBox="0 0 17 17">
              <path d="M11 12l4.500 4" stroke="#4a78d0" strokeWidth="2.400" />
              <circle cx="7.500" cy="7" r="6" fill="#2d3444" stroke="#5b7fc4" strokeWidth="1.400" />
              <path d="M6 6h2v4M6 10.200h4M7 3.800h1.400" fill="none" stroke="#e6ebf4" strokeWidth="1.400" />
            </svg>
          }
        />
      </div>
      <div className="flex h-[621px] flex-col rounded-[2px] bg-[#616161] p-[2px] pt-[4px]">
        <div className="flex h-[30px] shrink-0 items-center rounded-[4px] bg-[#3d3d3d] pl-[6px] text-[12px] text-[#c8c8c8]">
          <WIcon name="textbox" color="#f0f0f0" />
          <div className="ml-[3px] flex h-[18px] w-[200px] items-center rounded-[3px] bg-[#d8d8d8] pl-[5px] tracking-[0.07px] text-[#141414]">confirmationField</div>
          <div className="ml-[7px] flex h-[14px] w-[14px] items-center justify-center rounded-[2px] bg-[#b4b4b4]">
            <svg width="12" height="10" viewBox="0 0 12 10"><path d="M1.500 4.500l3 3.500L10.500 1" fill="none" stroke="#444" strokeWidth="2.400" /></svg>
          </div>
          <span className="ml-[4px] text-[12px]">Is Variable</span>
          <span className="mb-px ml-[18px] border-b border-dotted border-[#ddd] text-[12.850px] leading-[17px]">Open EditableTextBox</span>
        </div>
        <div className="flex h-[28px] shrink-0 items-center pl-[2px]">
          <Search text="Search Details" className="w-[445px]" />
          <div className="ml-[8px] flex h-[24px] w-[28px] items-center justify-center rounded-[2px] border border-[#333] bg-linear-to-b from-[#cfcfcf] to-[#979797]">
            <svg width="14" height="14" viewBox="0 0 14 14">
              <path d="M2 0v14M7 0v14M12 0v14" stroke="#555" strokeWidth="3.600" strokeDasharray="2 1" />
            </svg>
          </div>
          <svg width="19" height="12" viewBox="0 0 19 12" className="ml-[3px]">
            <path d="M0.500 6C4 0 15 0 18.500 6 15 12 4 12 .500 6z" fill="#c8ccd4" />
            <circle cx="9.500" cy="6" r="3.600" fill="#56759c" />
            <circle cx="9.500" cy="6" r="1.500" fill="#d8e4f0" />
          </svg>
          <span className="ml-[2px] text-[#b0b0b0]"><Down /></span>
        </div>
        <div className="relative min-h-0 grow">
          <div className="flex h-full flex-col gap-[2px]">
            <div className="h-[138px] rounded-[3px] bg-[#3d3d3d]">
              <Header text="Slot (Vertical Box Slot)" />
              <Row label="Padding" exp keyed><Input className="w-[234px] pt-px">0.0</Input></Row>
              <Row label="Size">
                <span className="ml-[4px] flex h-[19px] w-[34px] items-center justify-center rounded-[2px] bg-[#4f4f4f] text-[12px]">Auto</span>
                <span className="ml-[4px] flex h-[19px] w-[34px] items-center justify-center rounded-[2px] bg-[#da830c] text-[12px] text-[#ecdcc4]">Fill</span>
                <Input className="ml-[6px] w-[40px] text-[12px]">1.0</Input>
                <span className="ml-[6px]"><Reset /></span>
              </Row>
              <Row label="Horizontal Alignment" h="h-[33px]" keyed><Align set={H_ALIGN} /></Row>
              <Row label="Vertical Alignment" h="h-[33px]" keyed><Align set={V_ALIGN} /></Row>
            </div>
            <div className="h-[85px] rounded-[3px] bg-[#3d3d3d]">
              <Header text="Content" />
              <Row label="Text" h="h-[25px]">
                <Input className="h-[20px] w-[89px]" />
                <span className="ml-[6px] text-[#a0a0a0]"><Down /></span>
                <Bind className="ml-[23px]" />
              </Row>
              <Row label="Hint Text" h="h-[25px]">
                <Input className="h-[20px] w-[241px]">ENTER CONFIRMATION CODE FROM EMAIL HI</Input>
                <span className="ml-[6px] text-[#a0a0a0]"><Down /></span>
                <span className="ml-[9px]"><Reset /></span>
                <Bind className="ml-[4px]" />
              </Row>
              <Row label="" h="h-[11px]" />
            </div>
            <div className="grow rounded-[3px] bg-[#3d3d3d]">
              <Header text="Appearance" />
              <Row label="Background Image Normal" exp><Input className="w-[109px]" /></Row>
              <Row label="Background Image Hovered" exp><Input className="w-[109px] border-2 border-white" /></Row>
              <Row label="Background Image Focused" exp><Input className="w-[109px] border-2 border-white" /></Row>
              <Row label="Background Image Read Only" exp><div className="ml-px h-[17px] w-[107px] bg-[#7a7a7a]" /></Row>
              <Row label="Padding" exp><Input className="w-[234px] pt-px">4.0, 2.0</Input></Row>
              <Row label="Font" exp />
              <ColorRow label="Foreground Color" swatch="bg-black" />
              <ColorRow label="Background Color" swatch="bg-white" />
              <ColorRow label="Read Only Foreground Color" swatch="bg-[#dcdcdc]" />
              <Row label="HScroll Bar Padding" exp><Input className="w-[234px] pt-px">0.0</Input></Row>
              <Row label="VScroll Bar Padding" exp><Input className="w-[234px] pt-px">0.0</Input></Row>
              <Row label="Scroll Bar Style" exp />
              <Row label="Is Read Only" h="h-[25px]" keyed><Check className="ml-px" /></Row>
              <Row label="" h="h-[3px]" />
            </div>
          </div>
          <div className="absolute top-0 right-[2px] flex h-full w-[12px] flex-col items-center">
            <div className="h-[249px] w-[12px] rounded-[2px] border border-[#222] bg-white" />
            <div className="w-px grow bg-[#5a5a5a]" />
          </div>
        </div>
      </div>
    </section>
  );
}

/* ---------- compiler output ---------- */

function Output() {
  return (
    <section className="ml-px h-[276px] w-[1626px]">
      <div className="ml-[4px] flex gap-px">
        <Tab
          active={false}
          label="Timeline"
          icon={
            <svg width="16" height="12" viewBox="0 0 16 12">
              <path d="M1 1.500l14-1v3l-14 1z" fill="#dfe8f4" />
              <path d="M0 5.500h13v2.500H0zM2 9.500h12V12H2z" fill="#b9c9e2" />
              <path d="M5 .500v11M11 .500v11" stroke="#5a6f96" strokeWidth="1.400" />
            </svg>
          }
        />
        <Tab
          label="Compiler Results"
          icon={
            <svg width="14" height="15" viewBox="0 0 14 15">
              <path d="M0 0h9l5 4v11H0z" fill="#cfdcf4" />
              <path d="M2.500 4l3.500 3-3.500 3.500" fill="none" stroke="#1f3158" strokeWidth="1.800" />
              <path d="M6 12h5.500" stroke="#1f3158" strokeWidth="1.600" />
            </svg>
          }
        />
      </div>
      <div className="h-[254px] rounded-[2px] bg-[#616161] p-[2px]">
        <div className="flex h-full flex-col rounded-[3px] bg-[#3d3d3d] px-[4px] pt-[4px]">
          <div className="h-[211px] rounded-[2px] bg-[#222] pt-[2px] text-[12px] text-[#949494]">
            {[
              "Fast Template Successfully Created.",
              "[0246.52] Compile of registerForm successful! [in 263 ms] (/Game/craft/registerForm.registerForm)",
            ].map((t) => (
              <div key={t} className="flex h-[20px] items-center">
                <span className="mr-[13px] ml-[10px] h-[4px] w-[4px] rounded-full bg-[#6cb6ea]" />
                <span className="tracking-[-0.02px]">{t}</span>
              </div>
            ))}
          </div>
          <div className="flex grow items-center justify-end pr-[5px] pb-px text-[12px] text-[#c8c8c8]">Clear</div>
        </div>
      </div>
    </section>
  );
}

/* ---------- taskbar ---------- */

function TaskItem({ className, children }: { className: string; children: React.ReactNode }) {
  return <div className={`flex h-full items-center justify-center ${className}`}>{children}</div>;
}

function Taskbar() {
  return (
    <div className="flex h-[40px] bg-[#1b1b1b] font-['Open_Sans',sans-serif] text-white">
      <div className="flex w-[48px] items-center justify-center">
        <svg width="17" height="16" viewBox="0 0 17 16">
          <path d="M0 2.300l7.300-1v6.300H0zM8.200 1.200L17 0v7.600H8.200zM0 8.400h7.300v6.300L0 13.700zM8.200 8.400H17V16l-8.800-1.200z" fill="#fff" />
        </svg>
      </div>
      <div className="flex w-[344px] items-center border border-[#5c5c5c] bg-[#333] pl-[11px]">
        <svg width="17" height="17" viewBox="0 0 17 17">
          <circle cx="10.500" cy="6" r="5.300" fill="none" stroke="#e6e6e6" strokeWidth="1.200" />
          <path d="M6.700 9.800L0.700 16" stroke="#e6e6e6" strokeWidth="1.300" />
        </svg>
        <span className="ml-[11px] pt-px text-[14px] tracking-[-0.05px] text-[#dadada]">Type here to search</span>
      </div>
      <TaskItem className="w-[48px]">
        <svg width="17" height="17" viewBox="0 0 17 17"><circle cx="8.500" cy="8.500" r="6.800" fill="none" stroke="#fff" strokeWidth="2" /></svg>
      </TaskItem>
      <TaskItem className="w-[47px]">
        <svg width="17" height="17" viewBox="0 0 17 17">
          <path d="M1.500 0v3h9V0M1.500 17v-3h9v3M1.500 5.500h9v6h-9z" fill="none" stroke="#fff" strokeWidth="1.200" />
          <path d="M14 0v3M14 5v4M14 11v6" stroke="#fff" strokeWidth="1.800" />
        </svg>
      </TaskItem>
      <TaskItem className="w-[54px]">
        <svg width="23" height="19" viewBox="0 0 23 19">
          <rect x=".5" y=".5" width="22" height="18" fill="#060606" stroke="#8a8a8a" />
          <path d="M1 1h21v2.500H1z" fill="#c8c8c8" />
          <path d="M3 6.500h2M3 8.500h2M7 6v3M9 6l1.500 3M12 9h4" stroke="#ddd" />
        </svg>
      </TaskItem>
      <TaskItem className="relative w-[46px]">
        <svg width="23" height="23" viewBox="-12 -12 24 24">
          <circle r="11.500" fill="#e64234" />
          <path d="M0 0L-9.960-5.750A11.500 11.500 0 0 0 0 11.500L5 2z" fill="#2ea24c" />
          <path d="M0-5.200h10.260A11.500 11.500 0 0 1 0 11.500L4.500 2.600z" fill="#fbc116" />
          <circle r="5.300" fill="#fff" />
          <circle r="4.200" fill="#4686f2" />
        </svg>
        <div className="absolute bottom-0 left-[3px] h-[2px] w-[40px] bg-[#76c8f4]" />
      </TaskItem>
      <TaskItem className="w-[51px]">
        <svg width="22" height="19" viewBox="0 0 22 19">
          <path d="M0 0h9l2 3h11v15H0z" fill="#fbd466" />
          <path d="M0 0h9l1 2.500H0z" fill="#e6a11c" />
          <path d="M4 10h14v9h-4v-4.500H8V19H4z" fill="#3d9be0" />
        </svg>
      </TaskItem>
      <div className="flex w-[48px] border-b-2 border-[#76c8f4] bg-[#333]">
        <div className="flex w-[45px] items-center justify-center bg-[#474747] pt-px pl-px">
          <SiUnrealengine size={22} color="#fff" />
        </div>
      </div>
      <div className="flex grow items-center justify-end">
        <svg width="12" height="7" viewBox="0 0 12 7"><path d="M1 6.200l5-5 5 5" fill="none" stroke="#fff" strokeWidth="1.200" /></svg>
        <svg width="14" height="14" viewBox="0 0 14 14" className="ml-[13px]">
          <path d="M1 13A12 12 0 0 1 13 1M4 13a9 9 0 0 1 9-9M7 13a6 6 0 0 1 6-6" fill="none" stroke="#ddd" strokeWidth="1.100" />
          <circle cx="11.500" cy="11.500" r="1.500" fill="#fff" />
        </svg>
        <svg width="17" height="14" viewBox="0 0 17 14" className="ml-[7px]">
          <path d="M1 4.500h2.500l4-3.500v12l-4-3.500H1z" fill="none" stroke="#fff" strokeWidth="1.100" />
          <path d="M9.500 4.500a4 4 0 0 1 0 5" fill="none" stroke="#fff" />
          <path d="M11.500 2.500a7 7 0 0 1 0 9M13.500 1a10 10 0 0 1 0 12" fill="none" stroke="#777" />
        </svg>
        <div className="ml-[5px] flex w-[60px] flex-col items-center text-[11px] leading-[18px] whitespace-nowrap">
          <span>3:09 PM</span>
          <span>12/6/2020</span>
        </div>
        <svg width="17" height="17" viewBox="0 0 17 17" className="ml-[14px]">
          <path d="M1 1h15v11.500H10.500L8.500 15.500v-3H1z" fill="none" stroke="#fff" strokeWidth="1.200" />
        </svg>
        <div className="mr-[5px] ml-[18px] h-full w-px bg-[#555]" />
      </div>
    </div>
  );
}

export default function App() {
  return (
    <div className="h-[1080px] w-[1920px] overflow-hidden bg-[#222] font-['Roboto',sans-serif] leading-none">
      <TitleBar />
      <MenuBar />
      <Toolbar />
      <div className="flex h-[930px] gap-[4px] pt-[5px] pl-px">
        <div className="w-[286px] shrink-0">
          <Palette />
          <Hierarchy />
          <Animations />
        </div>
        <div className="w-[1628px] shrink-0">
          <div className="ml-px flex gap-[5px]">
            <Designer />
            <Details />
          </div>
          <div className="mt-[5px]">
            <Output />
          </div>
        </div>
      </div>
      <Taskbar />
    </div>
  );
}
